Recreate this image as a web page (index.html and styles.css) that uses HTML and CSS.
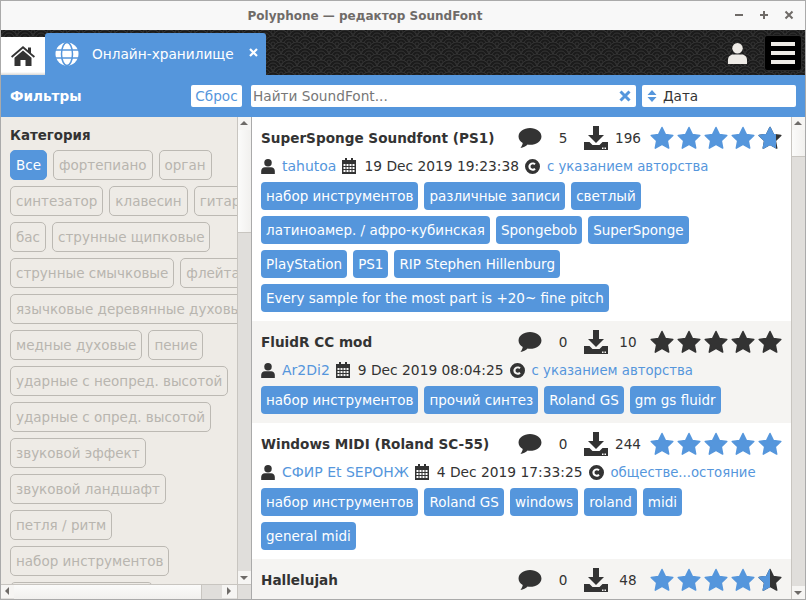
FILE: index.html
```html
<!DOCTYPE html>
<html lang="ru">

<head>
    <meta charset="UTF-8">
    <meta name="viewport" content="width=device-width, initial-scale=1.0">
    <title>Polyphone</title>
    <link rel="stylesheet" href="styles.css">
</head>

<body>

    <svg class="defs" width="0" height="0">
        <symbol id="star" viewBox="0 0 24 24">
            <path d="M12 1.500l3.300 6.900 7.500 1-5.500 5.200 1.400 7.500L12 18.400l-6.700 3.700 1.400-7.500-5.500-5.200 7.500-1z" stroke-linejoin="round" stroke="currentColor" stroke-width="1.500" />
        </symbol>
        <symbol id="comment" viewBox="0 0 24 22">
            <path d="M12 0C5.400 0 0 3.900 0 8.800c0 2.800 1.700 5.200 4.400 6.900-.3 2-1.400 3.800-2.400 5.300 2.900-.4 5.700-1.700 7.500-3.600.8.100 1.700.2 2.500.2 6.600 0 12-3.900 12-8.800S18.600 0 12 0z" />
        </symbol>
        <symbol id="download" viewBox="0 0 24 24">
            <path d="M9 0h6v9h5l-8 8-8-8h5z" />
            <path d="M0 16h5.500l3 3h7l3-3H24v8H0zM18 21.500h1.500V23H18zM20.500 21.500H22V23h-1.500z" fill-rule="evenodd" />
        </symbol>
        <symbol id="user" viewBox="0 0 20 22">
            <circle cx="10" cy="5.500" r="5.500" />
            <path d="M0 22v-4.500C0 14.500 2.500 12 5.500 12h9c3 0 5.500 2.500 5.500 5.500V22z" />
        </symbol>
        <symbol id="calendar" viewBox="0 0 14 16">
            <path d="M3 0h2v2h4V0h2v2h3v14H0V2h3zM1.500 6v2h2V6zm3 0v2h2V6zm3 0v2h2V6zm3 0v2h2V6zm-9 3v2h2V9zm3 0v2h2V9zm3 0v2h2V9zm3 0v2h2V9zm-9 3v2h2v-2zm3 0v2h2v-2zm3 0v2h2v-2zm3 0v2h2v-2z" fill-rule="evenodd" />
        </symbol>
        <symbol id="licence" viewBox="0 0 16 16">
            <path d="M8 0a8 8 0 1 0 0 16A8 8 0 0 0 8 0zm.2 3.600c1.300 0 2.400.5 3.200 1.300L10 6.400c-.5-.5-1.100-.8-1.800-.8-1.300 0-2.300 1-2.300 2.400s1 2.400 2.300 2.400c.7 0 1.300-.3 1.800-.8l1.400 1.500c-.8.800-1.900 1.300-3.200 1.300-2.600 0-4.600-1.900-4.600-4.400s2-4.400 4.600-4.400z" fill-rule="evenodd" />
        </symbol>
    </svg>

    <div class="window">
        <div class="titlebar">
            <span class="window-title">Polyphone — редактор SoundFont</span>
            <div class="window-buttons">
                <svg width="10" height="10" viewBox="0 0 10 10"><path d="M1 5h8" /></svg>
                <svg width="10" height="10" viewBox="0 0 10 10"><path d="M1 5h8M5 1v8" /></svg>
                <svg width="10" height="10" viewBox="0 0 10 10"><path d="M1.500 1.500l7 7M8.500 1.500l-7 7" /></svg>
            </div>
        </div>

        <div class="topbar">
            <svg class="topbar-pattern" width="100%" height="100%">
                <defs>
                    <pattern id="waves" width="16" height="12" patternUnits="userSpaceOnUse">
                        <g fill="#1b1b1b" stroke="#333" stroke-width="1">
                            <circle cx="8" cy="-4" r="8" />
                            <circle cx="8" cy="-4" r="5" />
                            <circle cx="8" cy="-4" r="2" />
                            <circle cx="0" cy="2" r="8" />
                            <circle cx="0" cy="2" r="5" />
                            <circle cx="0" cy="2" r="2" />
                            <circle cx="16" cy="2" r="8" />
                            <circle cx="16" cy="2" r="5" />
                            <circle cx="16" cy="2" r="2" />
                            <circle cx="8" cy="8" r="8" />
                            <circle cx="8" cy="8" r="5" />
                            <circle cx="8" cy="8" r="2" />
                            <circle cx="0" cy="14" r="8" />
                            <circle cx="0" cy="14" r="5" />
                            <circle cx="0" cy="14" r="2" />
                            <circle cx="16" cy="14" r="8" />
                            <circle cx="16" cy="14" r="5" />
                            <circle cx="16" cy="14" r="2" />
                        </g>
                    </pattern>
                </defs>
                <rect width="100%" height="100%" fill="url(#waves)" />
            </svg>

            <div class="tab tab-home">
                <svg width="24" height="20" viewBox="0 0 24 20">
                    <path d="M12 0l5 4.300V1.500h3v5.400l4 3.400-1.200 1.400L12 2.600 1.200 11.800 0 10.300z" />
                    <path d="M12 4.500l8.500 7.300V20h-6v-6h-5v6h-6v-8.200z" />
                </svg>
            </div>
            <div class="tab tab-online">
                <svg class="globe" width="24" height="24" viewBox="0 0 24 24">
                    <circle cx="12" cy="12" r="11.500" fill="#fff" />
                    <g fill="none" stroke="#5596dc" stroke-width="1.500">
                        <ellipse cx="12" cy="12" rx="5.500" ry="11.500" />
                        <path d="M0 8h24M0 16h24" />
                    </g>
                </svg>
                <span class="tab-label">Онлайн-хранилище</span>
                <svg class="tab-close" width="9" height="9" viewBox="0 0 9 9"><path d="M1 1l7 7M8 1L1 8" /></svg>
            </div>
            <div class="topbar-right">
                <svg class="account" width="19" height="21"><use href="#user" /></svg>
                <div class="menu-button">
                    <span></span>
                    <span></span>
                    <span></span>
                </div>
            </div>
        </div>

        <div class="filterbar">
            <span class="filter-title">Фильтры</span>
            <button class="reset">Сброс</button>
            <div class="search">
                <span class="search-text">Найти SoundFont...</span>
                <svg width="12" height="12" viewBox="0 0 12 12"><path d="M1.500 1.500l9 9M10.500 1.500l-9 9" /></svg>
            </div>
            <div class="sort">
                <svg width="10" height="12" viewBox="0 0 10 12"><path d="M5 0l4.500 5h-9zM5 12L.5 7h9z" /></svg>
                <span>Дата</span>
            </div>
        </div>

        <div class="content">
            <div class="sidebar">
                <div class="sidebar-view">
                    <div class="sidebar-inner">
                        <h2>Категория</h2>
                        <div class="filters">
                            <span class="filter active">Все</span>
                            <span class="filter">фортепиано</span>
                            <span class="filter">орган</span>
                            <span class="filter">синтезатор</span>
                            <span class="filter">клавесин</span>
                            <span class="filter">гитара</span>
                            <span class="filter">бас</span>
                            <span class="filter">струнные щипковые</span>
                            <span class="filter">струнные смычковые</span>
                            <span class="filter">флейта</span>
                            <span class="filter">язычковые деревянные духовые</span>
                            <span class="filter">медные духовые</span>
                            <span class="filter">пение</span>
                            <span class="filter">ударные с неопред. высотой</span>
                            <span class="filter">ударные с опред. высотой</span>
                            <span class="filter">звуковой эффект</span>
                            <span class="filter">звуковой ландшафт</span>
                            <span class="filter">петля / ритм</span>
                            <span class="filter">набор инструментов</span>
                            <span class="filter">различные записи</span>
                        </div>
                    </div>
                    <div class="scroll-v scroll-side">
                        <div class="arrow up"></div>
                        <div class="thumb"></div>
                        <div class="track"></div>
                        <div class="arrow down"></div>
                    </div>
                </div>
                <div class="scroll-h">
                    <div class="arrow left"></div>
                    <div class="thumb"></div>
                    <div class="track"></div>
                    <div class="arrow right"></div>
                    <div class="corner"></div>
                </div>
            </div>

            <div class="list">
                <div class="item">
                    <div class="item-head">
                        <span class="item-name">SuperSponge Soundfont (PS1)</span>
                        <svg class="ic-comment"><use href="#comment" /></svg>
                        <span class="count-comments">5</span>
                        <svg class="ic-download"><use href="#download" /></svg>
                        <span class="count-downloads">196</span>
                        <div class="stars">
                            <svg class="on"><use href="#star" /></svg>
                            <svg class="on"><use href="#star" /></svg>
                            <svg class="on"><use href="#star" /></svg>
                            <svg class="on"><use href="#star" /></svg>
                            <span class="half half-big"><svg><use href="#star" /></svg><svg class="on"><use href="#star" /></svg></span>
                        </div>
                    </div>
                    <div class="item-meta">
                        <svg class="ic-user"><use href="#user" /></svg>
                        <a class="author">tahutoa</a>
                        <svg class="ic-cal"><use href="#calendar" /></svg>
                        <span class="date">19 Dec 2019 19:23:38</span>
                        <svg class="ic-lic"><use href="#licence" /></svg>
                        <a class="licence">с указанием авторства</a>
                    </div>
                    <div class="tags">
                        <span class="tag">набор инструментов</span>
                        <span class="tag">различные записи</span>
                        <span class="tag">светлый</span>
                        <span class="tag">латиноамер. / афро-кубинская</span>
                        <span class="tag">Spongebob</span>
                        <span class="tag">SuperSponge</span>
                        <span class="tag">PlayStation</span>
                        <span class="tag">PS1</span>
                        <span class="tag">RIP Stephen Hillenburg</span>
                        <span class="tag">Every sample for the most part is +20~ fine pitch</span>
                    </div>
                </div>

                <div class="item alt">
                    <div class="item-head">
                        <span class="item-name">FluidR CC mod</span>
                        <svg class="ic-comment"><use href="#comment" /></svg>
                        <span class="count-comments">0</span>
                        <svg class="ic-download"><use href="#download" /></svg>
                        <span class="count-downloads">10</span>
                        <div class="stars">
                            <svg><use href="#star" /></svg>
                            <svg><use href="#star" /></svg>
                            <svg><use href="#star" /></svg>
                            <svg><use href="#star" /></svg>
                            <svg><use href="#star" /></svg>
                        </div>
                    </div>
                    <div class="item-meta">
                        <svg class="ic-user"><use href="#user" /></svg>
                        <a class="author">Ar2Di2</a>
                        <svg class="ic-cal"><use href="#calendar" /></svg>
                        <span class="date">9 Dec 2019 08:04:25</span>
                        <svg class="ic-lic"><use href="#licence" /></svg>
                        <a class="licence">с указанием авторства</a>
                    </div>
                    <div class="tags">
                        <span class="tag">набор инструментов</span>
                        <span class="tag">прочий синтез</span>
                        <span class="tag">Roland GS</span>
                        <span class="tag">gm gs fluidr</span>
                    </div>
                </div>

                <div class="item">
                    <div class="item-head">
                        <span class="item-name">Windows MIDI (Roland SC-55)</span>
                        <svg class="ic-comment"><use href="#comment" /></svg>
                        <span class="count-comments">0</span>
                        <svg class="ic-download"><use href="#download" /></svg>
                        <span class="count-downloads">244</span>
                        <div class="stars">
                            <svg class="on"><use href="#star" /></svg>
                            <svg class="on"><use href="#star" /></svg>
                            <svg class="on"><use href="#star" /></svg>
                            <svg class="on"><use href="#star" /></svg>
                            <svg class="on"><use href="#star" /></svg>
                        </div>
                    </div>
                    <div class="item-meta">
                        <svg class="ic-user"><use href="#user" /></svg>
                        <a class="author">СФИР Et SEРОНЖ</a>
                        <svg class="ic-cal"><use href="#calendar" /></svg>
                        <span class="date">4 Dec 2019 17:33:25</span>
                        <svg class="ic-lic"><use href="#licence" /></svg>
                        <a class="licence">обществе...остояние</a>
                    </div>
                    <div class="tags">
                        <span class="tag">набор инструментов</span>
                        <span class="tag">Roland GS</span>
                        <span class="tag">windows</span>
                        <span class="tag">roland</span>
                        <span class="tag">midi</span>
                        <span class="tag">general midi</span>
                    </div>
                </div>

                <div class="item alt">
                    <div class="item-head">
                        <span class="item-name">Hallelujah</span>
                        <svg class="ic-comment"><use href="#comment" /></svg>
                        <span class="count-comments">0</span>
                        <svg class="ic-download"><use href="#download" /></svg>
                        <span class="count-downloads">48</span>
                        <div class="stars">
                            <svg class="on"><use href="#star" /></svg>
                            <svg class="on"><use href="#star" /></svg>
                            <svg class="on"><use href="#star" /></svg>
                            <svg class="on"><use href="#star" /></svg>
                            <span class="half"><svg><use href="#star" /></svg><svg class="on"><use href="#star" /></svg></span>
                        </div>
                    </div>
                </div>
            </div>

            <div class="scroll-v scroll-main">
                <div class="arrow up"></div>
                <div class="thumb"></div>
                <div class="track"></div>
                <div class="arrow down"></div>
            </div>
        </div>
    </div>

</body>

</html>
```

FILE: styles.css
```css
* {
    box-sizing: border-box;
}

html,
body {
    margin: 0;
    height: 100%;
    overflow: hidden;
}

body {
    font-family: "DejaVu Sans", sans-serif;
    font-size: 13.6px;
    color: #333;
}

.defs {
    display: block;
    height: 0;
}

.window {
    width: 806px;
    height: 600px;
    border: 1px solid #aaa;
    display: flex;
    flex-direction: column;
    background: #fff;
}

/* title bar */
.titlebar {
    height: 29px;
    flex: none;
    background: #f8f8f8;
    display: flex;
    align-items: center;
    justify-content: center;
    padding-right: 76px;
    position: relative;
}

.window-title {
    font-size: 12px;
    font-weight: bold;
    color: #6f6b68;
}

.window-buttons {
    position: absolute;
    right: 11px;
    top: 9px;
    display: flex;
    gap: 15px;
}

.window-buttons svg {
    display: block;
    stroke: #6f6b68;
    stroke-width: 2;
    fill: none;
}

/* dark band with tabs */
.topbar {
    height: 45px;
    flex: none;
    position: relative;
    background: #1b1b1b;
    display: flex;
    align-items: flex-end;
    overflow: hidden;
}

.topbar-pattern {
    position: absolute;
    left: 0;
    top: 0;
}

.tab {
    position: relative;
    display: flex;
    align-items: center;
}

.tab-home {
    width: 44px;
    height: 38px;
    background: linear-gradient(to bottom, #fff 92%, #d9d7d3);
    justify-content: center;
}

.tab-home svg {
    fill: #333;
}

.tab-online {
    width: 221px;
    height: 42px;
    background: #5596dc;
    border-radius: 3px 3px 0 0;
    padding: 0 8px 0 10px;
    color: #fff;
    margin-right: auto;
}

.tab-label {
    margin-left: 13px;
    font-size: 13.7px;
}

.tab-close {
    margin-left: auto;
    margin-top: -3px;
    stroke: #fff;
    stroke-width: 2.2;
    fill: none;
}

.topbar-right {
    position: relative;
    display: flex;
    align-items: center;
    gap: 17px;
    padding: 0 3px 4px 0;
}

.account {
    fill: #eeebe6;
}

.menu-button {
    width: 38px;
    height: 36px;
    background: #000;
    border: 1px solid #2a2a2a;
    border-radius: 3px;
    padding: 6px 6px 0;
    display: flex;
    flex-direction: column;
    gap: 5px;
}

.menu-button span {
    height: 4px;
    background: #eeebe6;
}

/* filter row */
.filterbar {
    height: 42px;
    flex: none;
    background: #5596dc;
    display: flex;
    align-items: center;
    padding-left: 9px;
}

.filter-title {
    font-weight: bold;
    color: #fff;
    width: 181px;
}

.reset {
    width: 51px;
    height: 22px;
    border: 0;
    padding: 0;
    border-radius: 2px;
    background: #fff;
    color: #5596dc;
    font: 13.6px "DejaVu Sans", sans-serif;
}

.search {
    width: 385px;
    height: 22px;
    margin-left: 9px;
    background: #fff;
    border-radius: 2px;
    display: flex;
    align-items: center;
    justify-content: space-between;
    padding: 0 5px 0 2px;
}

.search-text {
    color: #777;
    font-size: 13.7px;
}

.search svg {
    stroke: #5596dc;
    stroke-width: 3;
    fill: none;
}

.sort {
    width: 154px;
    height: 22px;
    margin-left: 6px;
    background: #fff;
    border-radius: 2px;
    display: flex;
    align-items: center;
    gap: 6px;
    padding-left: 5px;
}

.sort svg {
    fill: #5596dc;
}

/* main area */
.content {
    flex: 1;
    min-height: 0;
    display: flex;
}

.sidebar {
    width: 251px;
    flex: none;
    display: flex;
    flex-direction: column;
    background: #eeebe6;
    border-right: 1px solid #aaa;
}

.sidebar-view {
    flex: 1;
    min-height: 0;
    display: flex;
}

.sidebar-inner {
    flex: 1;
    min-width: 0;
    overflow: hidden;
    padding: 10px 0 0 9px;
}

.sidebar-inner h2 {
    margin: 0 0 5px;
    font-size: 13.4px;
    line-height: 18px;
}

.filters {
    width: 252px;
    display: flex;
    flex-wrap: wrap;
    gap: 6px;
}

.filter {
    height: 30px;
    line-height: 28px;
    padding: 0 5px;
    border: 1px solid #bcb9b3;
    border-radius: 5px;
    color: #b8b5af;
    font-size: 13.5px;
    white-space: nowrap;
}

.filter.active {
    background: #5596dc;
    border-color: #5596dc;
    color: #fff;
}

/* scrollbars */
.scroll-v {
    width: 14px;
    flex: none;
    display: flex;
    flex-direction: column;
    background: #e0dedb;
    border-left: 1px solid #c8c5c0;
}

.scroll-h {
    height: 15px;
    flex: none;
    display: flex;
    background: #e0dedb;
    border-top: 1px solid #c8c5c0;
}

.scroll-v .arrow,
.scroll-h .arrow {
    flex: none;
    width: 13px;
    height: 13px;
    background: #f6f5f3;
    position: relative;
}

.arrow::after {
    content: "";
    position: absolute;
    left: 2px;
    top: 4px;
    border: 4px solid transparent;
    border-top: 0;
    border-bottom: 4px solid #6e6b68;
}

.arrow.down::after {
    border-bottom: 0;
    border-top: 4px solid #6e6b68;
    top: 5px;
}

.arrow.left::after {
    left: 4px;
    top: 2px;
    border: 4px solid transparent;
    border-left: 0;
    border-right: 4px solid #6e6b68;
}

.arrow.right::after {
    left: 5px;
    top: 2px;
    border: 4px solid transparent;
    border-right: 0;
    border-left: 4px solid #6e6b68;
}

.thumb {
    background: linear-gradient(to right, #fbfbfa, #f1f0ee);
    flex: none;
}

.track {
    flex: 1;
}

.scroll-side .thumb {
    height: 103px;
    border-bottom: 1px solid #c8c5c0;
}

.scroll-main .thumb {
    height: 27px;
    border-bottom: 1px solid #c8c5c0;
}

.scroll-h .thumb {
    width: 188px;
    background: linear-gradient(to bottom, #fbfbfa, #f1f0ee);
    border-right: 1px solid #c8c5c0;
}

.scroll-h .arrow.right {
    width: 15px;
}

.scroll-h .corner {
    width: 14px;
    border-left: 1px solid #c8c5c0;
}

/* list of soundfonts */
.list {
    flex: 1;
    min-width: 0;
    overflow: hidden;
}

.item {
    padding: 9px 0 9px 9px;
    background: #fff;
}

.item.alt {
    background: #f5f4f2;
}

.item-head {
    height: 24px;
    position: relative;
    display: flex;
    align-items: center;
}

.item-name {
    font-weight: bold;
    width: 257px;
    white-space: nowrap;
}

.ic-comment {
    width: 24px;
    height: 21px;
    fill: #333;
}

.count-comments {
    width: 42px;
    text-align: center;
}

.ic-download {
    width: 24px;
    height: 24px;
    fill: #333;
}

.count-downloads {
    width: 40px;
    text-align: center;
    white-space: nowrap;
}

.stars {
    display: flex;
    gap: 3px;
    margin-left: 2px;
    fill: #333;
    color: #333;
}

.stars svg {
    display: block;
    width: 24px;
    height: 24px;
}

.stars .on {
    fill: #5596dc;
    color: #5596dc;
}

.half {
    position: relative;
    width: 24px;
    height: 24px;
}

/* the coloured part of the last star is cut at its rating */
.half .on {
    position: absolute;
    left: 0;
    top: 0;
    clip-path: inset(0 50% 0 0);
}

.half-big .on {
    clip-path: inset(0 25% 0 0);
}

.item-meta {
    height: 20px;
    margin-top: 6px;
    display: flex;
    align-items: center;
    white-space: nowrap;
}

.item-meta a {
    color: #5596dc;
}

.author {
    font-size: 14px;
}

.date {
    font-size: 13.8px;
}

.licence {
    font-size: 13.25px;
}

.ic-user {
    width: 14px;
    height: 15px;
    fill: #333;
    margin-right: 7px;
}

.ic-cal {
    width: 14px;
    height: 16px;
    fill: #333;
    margin: 0 8px 0 6px;
}

.ic-lic {
    width: 15px;
    height: 15px;
    fill: #333;
    margin: 0 7px 0 6px;
}

.tags {
    width: 510px;
    margin-top: 6px;
    display: flex;
    flex-wrap: wrap;
    gap: 6px;
}

.tag {
    height: 28px;
    line-height: 28px;
    padding: 0 5px;
    background: #5596dc;
    color: #fff;
    border-radius: 4px;
    font-size: 13.5px;
    white-space: nowrap;
}

.scroll-main {
    height: 100%;
}
```
